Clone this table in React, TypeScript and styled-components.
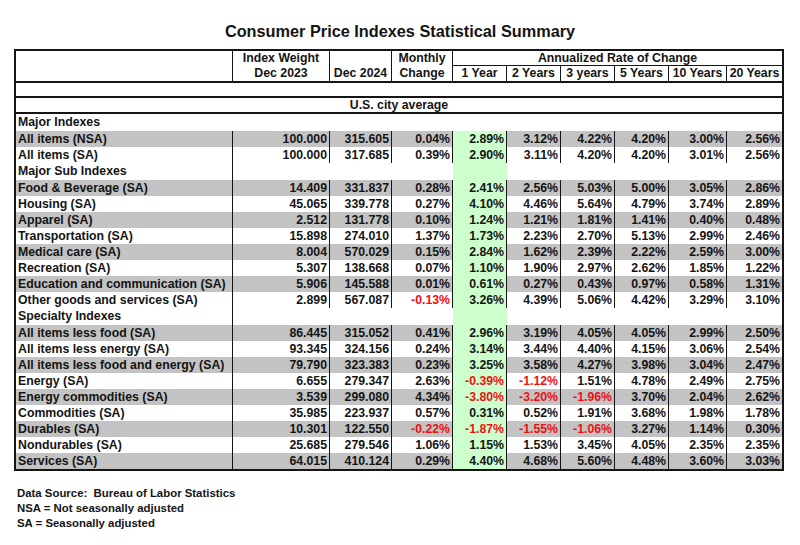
import React from 'react';
import styled, { createGlobalStyle } from 'styled-components';

const GlobalStyle = createGlobalStyle`
  html, body { margin: 0; padding: 0; background: #ffffff; }
  body { font-family: "Liberation Sans", Arial, sans-serif; color: #141414; }
`;

const COLS = '217px 97px 62px 61px 54px 54px 54px 54px 58px 55px';
const LINE = '#151515';
const GRAY = '#c3c3c3';
const GREEN = '#ccffcc';

const Page = styled.div`
  width: 800px;
  height: 545px;
  box-sizing: border-box;
  padding-top: 21px;
  overflow: hidden;
`;

const Title = styled.h1`
  margin: 0 0 8px;
  font-size: 16.3px;
  line-height: 20px;
  font-weight: bold;
  text-align: center;
`;

const Table = styled.div`
  margin-left: 14px;
  width: 770px;
  box-sizing: border-box;
  border: 2px solid ${LINE};
  font-size: 12.3px;
  font-weight: bold;
`;

const Header = styled.div`
  display: grid;
  grid-template-columns: ${COLS};
  grid-template-rows: 15px 15px;
  border-bottom: 2px solid ${LINE};
`;

const HeadCell = styled.div<{ $col: string; $row: string; $bottom?: boolean; $noRight?: boolean; $underline?: boolean }>`
  grid-column: ${(p) => p.$col};
  grid-row: ${(p) => p.$row};
  display: flex;
  flex-direction: column;
  justify-content: ${(p) => (p.$bottom ? 'flex-end' : 'flex-start')};
  align-items: center;
  line-height: 15px;
  white-space: nowrap;
  box-sizing: border-box;
  border-right: ${(p) => (p.$noRight ? 'none' : `1px solid ${LINE}`)};
  border-bottom: ${(p) => (p.$underline ? `1px solid ${LINE}` : 'none')};
`;

const BlankBand = styled.div`
  height: 13px;
  border-bottom: 2px solid ${LINE};
`;

const CityBand = styled.div`
  height: 14px;
  line-height: 14px;
  text-align: center;
  border-bottom: 2px solid ${LINE};
`;

const Row = styled.div<{ $shade?: boolean; $tall?: boolean }>`
  display: grid;
  grid-template-columns: ${COLS};
  height: ${(p) => (p.$tall ? 17 : 16)}px;
  line-height: ${(p) => (p.$tall ? 17 : 16)}px;
  background: ${(p) => (p.$shade ? GRAY : '#ffffff')};
`;

const Cell = styled.div<{ $hl?: boolean; $neg?: boolean; $last?: boolean }>`
  text-align: right;
  padding-right: 2px;
  white-space: nowrap;
  overflow: hidden;
  border-right: ${(p) => (p.$last ? 'none' : `1px solid ${LINE}`)};
  background: ${(p) => (p.$hl ? GREEN : 'transparent')};
  color: ${(p) => (p.$neg ? '#f01010' : 'inherit')};
`;

const LabelCell = styled.div<{ $span?: boolean }>`
  grid-column: ${(p) => (p.$span ? '1 / -1' : 'auto')};
  text-align: left;
  padding-left: 2px;
  font-weight: bold;
  white-space: nowrap;
  overflow: hidden;
  border-right: ${(p) => (p.$span ? 'none' : `1px solid ${LINE}`)};
`;

const Gap = styled.div<{ $col: string; $hl?: boolean }>`
  grid-column: ${(p) => p.$col};
  background: ${(p) => (p.$hl ? GREEN : 'transparent')};
`;

const Notes = styled.div`
  margin: 15px 0 0 17px;
  font-size: 11.4px;
  line-height: 15px;
  font-weight: bold;
`;

type Data = string[];
type Section = { title: string; rows: Data[] };

const sections: Section[] = [
  {
    title: 'Major Indexes',
    rows: [
      ['All items (NSA)', '100.000', '315.605', '0.04%', '2.89%', '3.12%', '4.22%', '4.20%', '3.00%', '2.56%'],
      ['All items (SA)', '100.000', '317.685', '0.39%', '2.90%', '3.11%', '4.20%', '4.20%', '3.01%', '2.56%'],
    ],
  },
  {
    title: 'Major Sub Indexes',
    rows: [
      ['Food & Beverage (SA)', '14.409', '331.837', '0.28%', '2.41%', '2.56%', '5.03%', '5.00%', '3.05%', '2.86%'],
      ['Housing (SA)', '45.065', '339.778', '0.27%', '4.10%', '4.46%', '5.64%', '4.79%', '3.74%', '2.89%'],
      ['Apparel (SA)', '2.512', '131.778', '0.10%', '1.24%', '1.21%', '1.81%', '1.41%', '0.40%', '0.48%'],
      ['Transportation (SA)', '15.898', '274.010', '1.37%', '1.73%', '2.23%', '2.70%', '5.13%', '2.99%', '2.46%'],
      ['Medical care (SA)', '8.004', '570.029', '0.15%', '2.84%', '1.62%', '2.39%', '2.22%', '2.59%', '3.00%'],
      ['Recreation (SA)', '5.307', '138.668', '0.07%', '1.10%', '1.90%', '2.97%', '2.62%', '1.85%', '1.22%'],
      ['Education and communication (SA)', '5.906', '145.588', '0.01%', '0.61%', '0.27%', '0.43%', '0.97%', '0.58%', '1.31%'],
      ['Other goods and services (SA)', '2.899', '567.087', '-0.13%', '3.26%', '4.39%', '5.06%', '4.42%', '3.29%', '3.10%'],
    ],
  },
  {
    title: 'Specialty Indexes',
    rows: [
      ['All items less food (SA)', '86.445', '315.052', '0.41%', '2.96%', '3.19%', '4.05%', '4.05%', '2.99%', '2.50%'],
      ['All items less energy (SA)', '93.345', '324.156', '0.24%', '3.14%', '3.44%', '4.40%', '4.15%', '3.06%', '2.54%'],
      ['All items less food and energy (SA)', '79.790', '323.383', '0.23%', '3.25%', '3.58%', '4.27%', '3.98%', '3.04%', '2.47%'],
      ['Energy (SA)', '6.655', '279.347', '2.63%', '-0.39%', '-1.12%', '1.51%', '4.78%', '2.49%', '2.75%'],
      ['Energy commodities (SA)', '3.539', '299.080', '4.34%', '-3.80%', '-3.20%', '-1.96%', '3.70%', '2.04%', '2.62%'],
      ['Commodities (SA)', '35.985', '223.937', '0.57%', '0.31%', '0.52%', '1.91%', '3.68%', '1.98%', '1.78%'],
      ['Durables (SA)', '10.301', '122.550', '-0.22%', '-1.87%', '-1.55%', '-1.06%', '3.27%', '1.14%', '0.30%'],
      ['Nondurables (SA)', '25.685', '279.546', '1.06%', '1.15%', '1.53%', '3.45%', '4.05%', '2.35%', '2.35%'],
      ['Services (SA)', '64.015', '410.124', '0.29%', '4.40%', '4.68%', '5.60%', '4.48%', '3.60%', '3.03%'],
    ],
  },
];

const years = ['1 Year', '2 Years', '3 years', '5 Years', '10 Years', '20 Years'];

export default function App() {
  return (
    <Page>
      <GlobalStyle />
      <Title>Consumer Price Indexes Statistical Summary</Title>
      <Table>
        <Header>
          <HeadCell $col="1" $row="1 / span 2" />
          <HeadCell $col="2" $row="1 / span 2">
            <span>Index Weight</span>
            <span>Dec 2023</span>
          </HeadCell>
          <HeadCell $col="3" $row="1 / span 2" $bottom>
            <span>Dec 2024</span>
          </HeadCell>
          <HeadCell $col="4" $row="1 / span 2">
            <span>Monthly</span>
            <span>Change</span>
          </HeadCell>
          <HeadCell $col="5 / span 6" $row="1" $noRight $underline>
            <span>Annualized Rate of Change</span>
          </HeadCell>
          {years.map((y, i) => (
            <HeadCell key={y} $col={String(5 + i)} $row="2" $noRight={i === years.length - 1}>
              <span>{y}</span>
            </HeadCell>
          ))}
        </Header>
        <BlankBand />
        <CityBand>U.S. city average</CityBand>
        {sections.map((s, si) => (
          <React.Fragment key={s.title}>
            {si === 0 ? (
              <Row $tall>
                <LabelCell $span>{s.title}</LabelCell>
              </Row>
            ) : (
              <Row $tall>
                <LabelCell>{s.title}</LabelCell>
                <Gap $col="2 / span 3" />
                <Gap $col="5" $hl />
                <Gap $col="6 / span 5" />
              </Row>
            )}
            {s.rows.map((r, ri) => (
              <Row key={r[0]} $shade={ri % 2 === 0}>
                <LabelCell>{r[0]}</LabelCell>
                {r.slice(1).map((v, ci) => (
                  <Cell key={ci} $hl={ci === 3} $neg={v.startsWith('-')} $last={ci === r.length - 2}>
                    {v}
                  </Cell>
                ))}
              </Row>
            ))}
          </React.Fragment>
        ))}
      </Table>
      <Notes>
        <div>Data Source:&nbsp; Bureau of Labor Statistics</div>
        <div>NSA = Not seasonally adjusted</div>
        <div>SA = Seasonally adjusted</div>
      </Notes>
    </Page>
  );
}
